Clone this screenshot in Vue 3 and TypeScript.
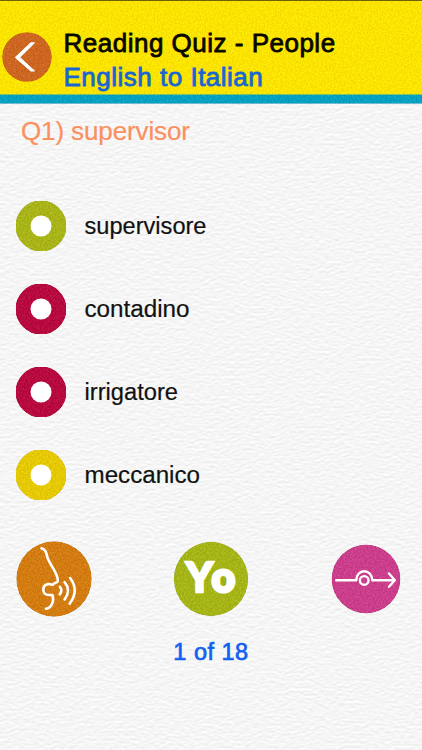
<script setup lang="ts">
interface Answer {
  text: string
  color: string
  width: number
}

const answers: Answer[] = [
  { text: 'supervisore', color: '#a9b418', width: 122 },
  { text: 'contadino', color: '#b70b40', width: 105 },
  { text: 'irrigatore', color: '#b70b40', width: 93.5 },
  { text: 'meccanico', color: '#e5c904', width: 115.5 },
]
</script>

<template>
  <div class="screen">
    <svg class="paper" width="422" height="750" aria-hidden="true">
      <defs>
        <filter id="paper" x="0" y="0" width="100%" height="100%" color-interpolation-filters="sRGB">
          <feTurbulence type="fractalNoise" baseFrequency="0.2 0.4" numOctaves="2" seed="8" result="n" />
          <feDiffuseLighting in="n" surfaceScale="0.14" diffuseConstant="1.148" lighting-color="#ffffff">
            <feDistantLight azimuth="265" elevation="57" />
          </feDiffuseLighting>
        </filter>
        <filter id="grain" x="0" y="0" width="100%" height="100%" color-interpolation-filters="sRGB">
          <feTurbulence type="fractalNoise" baseFrequency="0.61" numOctaves="2" seed="3" />
          <feColorMatrix values="1 0 0 0 0  1 0 0 0 0  1 0 0 0 0  0 0 0 0 1" result="n" />
          <feComposite in="SourceGraphic" in2="n" operator="arithmetic" k2="1" k3="0.18" k4="-0.09" />
          <feComposite in2="SourceGraphic" operator="in" />
        </filter>
      </defs>
      <rect width="422" height="750" filter="url(#paper)" />
    </svg>

    <div class="content">
      <header class="header">
        <svg class="header-bg" width="422" height="104" aria-hidden="true">
          <g filter="url(#grain)">
            <rect width="422" height="95" fill="#fbe400" />
            <rect y="94.5" width="422" height="9.2" fill="#06a0c2" />
          </g>
          <rect width="422" height="1" fill="#70620c" />
        </svg>
        <div class="header-row">
          <button class="icon-button" aria-label="Back">
            <svg width="50" height="50" viewBox="0 0 50 50">
              <circle cx="25" cy="25" r="24.8" fill="#cc6620" filter="url(#grain)" />
              <path d="M28.8 10.8H32.6L17.8 25.4L32.6 39H28.8L13.2 25.4Z" fill="#fff" stroke="#fff" stroke-width="1" />
            </svg>
          </button>
          <div class="titles">
            <h1 class="title">Reading Quiz - People</h1>
            <h2 class="subtitle">English to Italian</h2>
          </div>
        </div>
      </header>

      <p class="question">Q1) supervisor</p>

      <ul class="answers">
        <li v-for="answer in answers" :key="answer.text" class="answer">
          <svg width="50" height="50" viewBox="0 0 50 50" aria-hidden="true">
            <circle cx="25" cy="25" r="25.6" :fill="answer.color" filter="url(#grain)" />
            <circle cx="25" cy="25" r="10.5" fill="#fff" />
          </svg>
          <svg class="label" width="200" height="50">
            <text x="0.5" y="32.6" :textLength="answer.width" lengthAdjust="spacingAndGlyphs">{{ answer.text }}</text>
          </svg>
        </li>
      </ul>

      <div class="actions">
        <button class="icon-button" aria-label="Listen">
          <svg width="76" height="76" viewBox="0 0 76 76">
            <circle cx="38" cy="38" r="37.7" fill="#d27c12" filter="url(#grain)" />
            <g fill="none" stroke="#fff" stroke-width="2.6" stroke-linecap="round" stroke-linejoin="round">
              <path d="M25.5 7.3C29 8.3 30.2 10.6 30.8 14C31.9 20.5 36.6 25.4 39.4 31.5C41.3 35.6 42.6 39 41.4 40.7C40.2 42.3 37.1 41.6 37.1 43.6C36.2 44.3 34.6 42.6 31.8 43.1C28.7 43.7 27.2 46.5 27.4 49.5C27.7 53.7 30.8 54.4 36.5 54.1C38.4 60 35.4 67.5 29.9 67.7" />
              <path d="M43.9 45.8Q47 49.3 43.7 53.3" />
              <path d="M48.6 41.2Q55.4 49.3 48.6 58.5" />
              <path d="M54.1 37Q63.6 49.5 53.6 62.7" />
            </g>
          </svg>
        </button>
        <button class="icon-button" aria-label="Yo">
          <svg width="76" height="76" viewBox="0 0 76 76">
            <circle cx="38" cy="38" r="37.2" fill="#a5b416" filter="url(#grain)" />
            <text class="yo" x="13 38.6" y="50.8">Y<tspan class="yo-round">o</tspan></text>
          </svg>
        </button>
        <button class="icon-button" aria-label="Next">
          <svg width="70" height="70" viewBox="0 0 70 70">
            <circle cx="35" cy="35" r="34.4" fill="#ca3e8b" filter="url(#grain)" />
            <g fill="none" stroke="#fff" stroke-width="2.4" stroke-linecap="round" stroke-linejoin="round">
              <path d="M5.2 36.2H25.3C25.3 31 28.8 27.2 33.2 27.2S41.3 31 41.3 36.2H63.5" />
              <circle cx="33.2" cy="36.4" r="4.3" />
              <path d="M58 29.5L63.8 36.2L58 42.8" />
            </g>
          </svg>
        </button>
      </div>

      <p class="counter">1 of 18</p>
    </div>
  </div>
</template>

<style>
body {
  margin: 0;
}
</style>

<style scoped>
.screen {
  display: grid;
  width: 422px;
  height: 750px;
  overflow: hidden;
  background: #f4f4f4;
  font-family: "Liberation Sans", Arial, sans-serif;
}

.paper,
.content {
  grid-area: 1 / 1;
}

.paper,
.icon-button svg,
.answer svg {
  display: block;
}

.content {
  min-width: 0;
  z-index: 1;
}

.header {
  display: grid;
  height: 104px;
}

.header-bg,
.header-row {
  grid-area: 1 / 1;
}

.header-row {
  display: flex;
  z-index: 1;
  padding: 32px 0 0 1.5px;
}

.icon-button {
  flex: none;
  align-self: flex-start;
  padding: 0;
  border: 0;
  background: none;
}

.titles {
  padding: 0 0 0 12px;
  margin-top: -6px;
}

.title,
.subtitle {
  margin: 0;
  font-size: 26px;
  font-weight: 400;
  line-height: 34px;
  white-space: nowrap;
  letter-spacing: 0.5px;
  -webkit-text-stroke: 0.8px currentColor;
}

.title {
  color: #080800;
}

.subtitle {
  color: #1866d2;
}

.question {
  margin: 10px 0 0 21px;
  color: #fa9060;
  font-size: 26px;
  line-height: 34px;
  letter-spacing: -0.12px;
  -webkit-text-stroke: 0.2px currentColor;
}

.answers {
  display: grid;
  gap: 33px;
  margin: 53px 0 0;
  padding: 0 0 0 16px;
  list-style: none;
}

.answer {
  display: flex;
  align-items: center;
  gap: 18px;
  height: 50px;
}

.label {
  fill: #111;
  stroke: #111;
  stroke-width: 0.2px;
  font-size: 23.5px;
}

.actions {
  display: flex;
  align-items: center;
  justify-content: space-between;
  height: 76px;
  margin-top: 41px;
  padding: 0 21px 0 16px;
}

.actions .icon-button {
  align-self: center;
}

.actions .icon-button:nth-child(2) {
  margin-right: 2px;
}

.yo {
  fill: #fff;
  stroke: #fff;
  stroke-width: 2.4px;
  font-family: Lato, sans-serif;
  font-size: 41px;
  font-weight: 900;
}

.yo-round {
  stroke-width: 3px;
}

.counter {
  margin: 19px 0 0;
  color: #135ff0;
  font-size: 23.5px;
  line-height: 32px;
  letter-spacing: 0.5px;
  text-align: center;
  -webkit-text-stroke: 0.7px currentColor;
}
</style>
